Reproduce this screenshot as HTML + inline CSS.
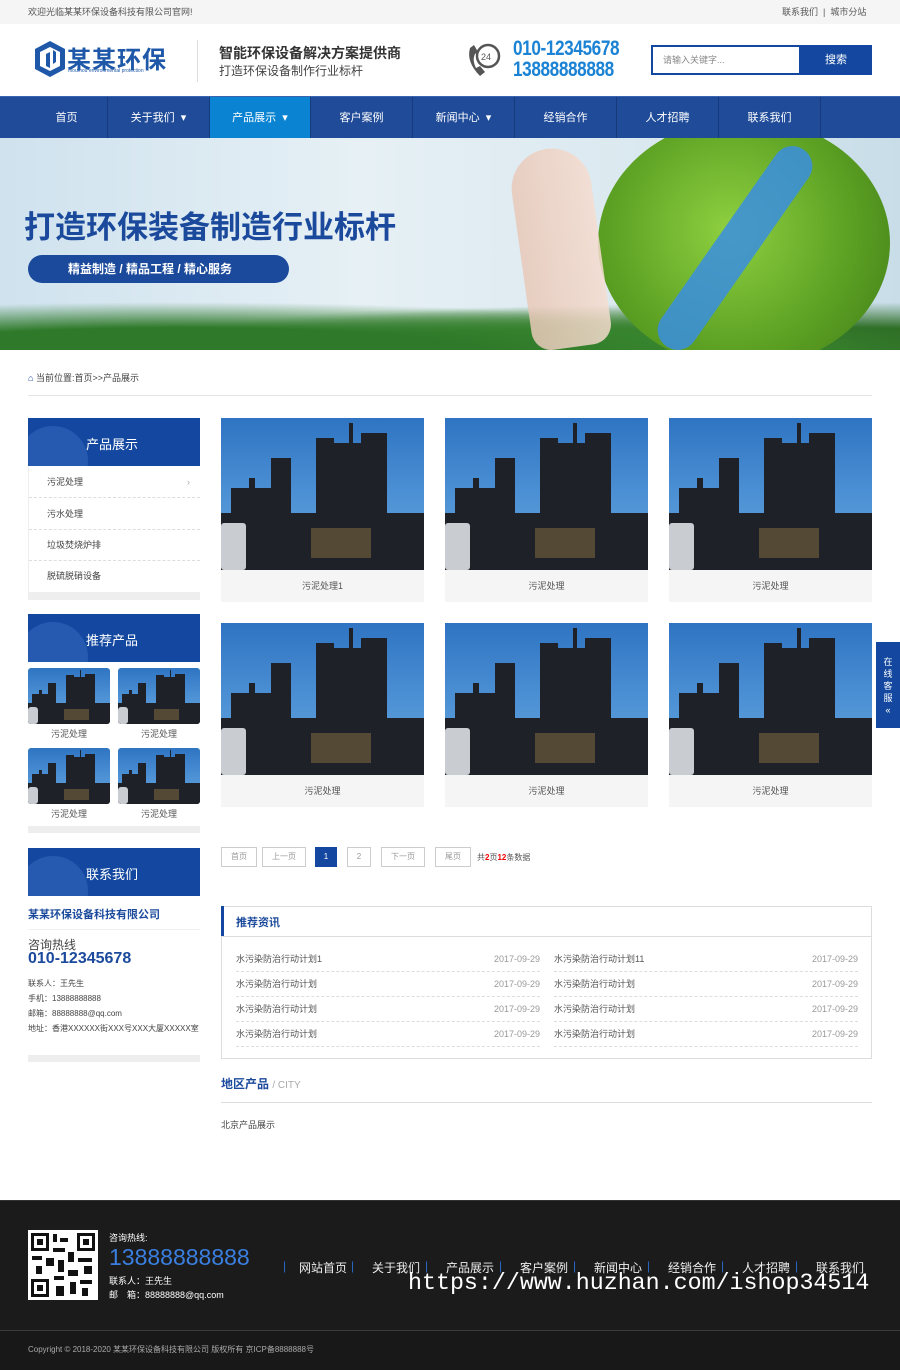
<!DOCTYPE html>
<html><head><meta charset="utf-8"><style>
*{margin:0;padding:0;box-sizing:border-box}
body{width:900px;height:1370px;position:relative;font-family:"Liberation Sans","Noto Sans CJK SC",sans-serif;color:#333;background:#fff;overflow:hidden}
.a{position:absolute}
.top{left:0;top:0;width:900px;height:24px;background:#f5f5f5;font-size:9px;color:#555;line-height:24px}
.nav{left:0;top:96px;width:900px;height:42px;background:#1f4b98;border-top:1px solid #3a64ad}
.nav div{position:absolute;top:0;height:42px;line-height:42px;color:#fff;font-size:11px;text-align:center;border-right:1px solid #163b7c}
.pi{background:#f5f5f5}
.img{position:absolute;left:0;top:0;width:100%;overflow:hidden;background:linear-gradient(#2f74c2,#4f93d6 55%,#6aa4dc)}
.img i{position:absolute;background:#1e2228}
.cap{position:absolute;left:0;width:100%;text-align:center;font-size:9px;color:#555}
.sh{background:#1448a0;color:#fff;font-size:13px;overflow:hidden}
.sh b{font-weight:normal;position:absolute;left:58px;top:16px}
.sh s{position:absolute;left:-10px;top:8px;width:70px;height:70px;border-radius:50%;background:#2b5fb4;opacity:.8}
.pg{position:absolute;top:847px;height:20px;border:1px solid #ccc;font-size:8px;color:#999;text-align:center;line-height:18px}
.nl{position:absolute;font-size:9px;color:#555;height:25px;line-height:25px;border-bottom:1px dashed #ddd}
.nl span{float:right;color:#999}
.ft{color:#fff}
.fn span{position:absolute;top:0}
</style></head><body>
<div class="a top"><span style="position:absolute;left:28px">欢迎光临某某环保设备科技有限公司官网!</span><span style="position:absolute;left:782px">联系我们 &nbsp;|&nbsp; 城市分站</span></div>
<svg class="a" style="left:34px;top:40px" width="32" height="38" viewBox="0 0 32 38"><path d="M16 1 L31 9 L31 29 L16 37 L1 29 L1 9 Z" fill="#1f58a8"/><path d="M16 7 L26 12 L26 26 L16 31 L6 26 L6 12Z" fill="#fff"/><path d="M12 14 L12 26 L16 28 L16 12Z M19 10 L19 24 L22 22 L22 12Z" fill="#1f58a8"/></svg>
<div class="a" style="left:67px;top:40px;font-size:24px;font-weight:bold;color:#1f58a8;letter-spacing:1px">某某环保</div>
<div class="a" style="left:68px;top:68px;font-size:5px;color:#1f58a8">moumou environmental protection</div>
<div class="a" style="left:197px;top:40px;width:1px;height:42px;background:#ddd"></div>
<div class="a" style="left:219px;top:43px;font-size:14px;font-weight:bold;color:#333">智能环保设备解决方案提供商</div>
<div class="a" style="left:219px;top:62px;font-size:12px;color:#444">打造环保设备制作行业标杆</div>
<svg class="a" style="left:466px;top:40px" width="40" height="40" viewBox="0 0 40 40"><circle cx="22" cy="16" r="11" fill="none" stroke="#555" stroke-width="2.5"/><text x="15" y="20" font-size="9" fill="#555" font-family="Liberation Sans">24</text><path d="M4 8 Q0 22 14 36 L19 32 L14 26 L10 28 Q6 20 9 14 L12 12 L8 5Z" fill="#555"/></svg>
<div class="a" style="left:513px;top:38px;font-size:21px;font-weight:bold;color:#1c83d4;line-height:21px;letter-spacing:-.5px;transform:scaleX(.82);transform-origin:left;white-space:nowrap">010-12345678<br>13888888888</div>
<div class="a" style="left:651px;top:45px;width:150px;height:30px;border:2px solid #1448a0;font-size:9px;color:#888;line-height:26px;padding-left:10px">请输入关键字...</div>
<div class="a" style="left:800px;top:45px;width:72px;height:30px;background:#1448a0;color:#fff;font-size:11px;text-align:center;line-height:30px">搜索</div>
<div class="a nav">
<div style="left:0;width:108px;padding-left:26px">首页</div>
<div style="left:108px;width:102px">关于我们 &nbsp;▾</div>
<div style="left:210px;width:101px;background:#0a84d2">产品展示 &nbsp;▾</div>
<div style="left:311px;width:102px">客户案例</div>
<div style="left:413px;width:102px">新闻中心 &nbsp;▾</div>
<div style="left:515px;width:102px">经销合作</div>
<div style="left:617px;width:102px">人才招聘</div>
<div style="left:719px;width:102px">联系我们</div>
</div>
<div class="a" style="left:0;top:138px;width:900px;height:212px;overflow:hidden;background:linear-gradient(90deg,#cfe2ee,#e6f0f5 40%,#dbe9f0 70%,#c8dde8)">
<div class="a" style="left:0;top:155px;width:900px;height:60px;background:radial-gradient(ellipse at 20% 100%,#2f7a2a 30%,transparent 60%),radial-gradient(ellipse at 60% 100%,#3c8a30 25%,transparent 55%),radial-gradient(ellipse at 90% 100%,#2e6e26 30%,transparent 60%)"></div>
<div class="a" style="left:598px;top:-20px;width:292px;height:250px;border-radius:50%;background:radial-gradient(circle at 45% 45%,#8ed040,#5a9e22 60%,#3f7a18)"></div>
<div class="a" style="left:715px;top:-10px;width:40px;height:240px;background:#3a8ee0;transform:rotate(35deg);border-radius:20px;opacity:.85"></div>
<div class="a" style="left:520px;top:10px;width:80px;height:200px;background:linear-gradient(90deg,#e8c8b8,#f5dccf);border-radius:40px 40px 20px 20px;transform:rotate(-8deg);opacity:.85"></div>
<div class="a" style="left:24px;top:64px;font-size:31px;font-weight:bold;color:#1b4a9c;white-space:nowrap">打造环保装备制造行业标杆</div>
<div class="a" style="left:28px;top:117px;width:261px;height:28px;border-radius:14px;background:#1b4a9c;color:#fff;font-size:12px;font-weight:bold;line-height:28px;padding-left:40px">精益制造 / 精品工程 / 精心服务</div>
</div>
<div class="a" style="left:28px;top:371px;font-size:9px;color:#444"><span style="color:#1448a0">⌂</span> 当前位置:首页&gt;&gt;产品展示</div>
<div class="a" style="left:28px;top:395px;width:844px;height:1px;background:#e5e5e5"></div>
<div class="a sh" style="left:28px;top:418px;width:172px;height:48px"><s></s><b>产品展示</b></div>
<div class="a" style="left:28px;top:466px;width:172px;height:134px;border-left:1px solid #eee;font-size:9px;color:#444">
<div style="height:32px;line-height:32px;padding-left:18px;border-bottom:1px dashed #ddd">污泥处理<span style="float:right;margin-right:10px;color:#aaa">›</span></div>
<div style="height:32px;line-height:32px;padding-left:18px;border-bottom:1px dashed #ddd">污水处理</div>
<div style="height:31px;line-height:31px;padding-left:18px;border-bottom:1px dashed #ddd">垃圾焚烧炉排</div>
<div style="height:31px;line-height:31px;padding-left:18px">脱硫脱硝设备</div>
<div style="height:8px;background:#eee;margin-left:-1px"></div>
</div>
<div class="a sh" style="left:28px;top:614px;width:172px;height:48px"><s></s><b>推荐产品</b></div>
<div id="rec"></div>
<div class="a" style="left:28px;top:826px;width:172px;height:7px;background:#eee"></div>
<div class="a sh" style="left:28px;top:848px;width:172px;height:48px"><s></s><b>联系我们</b></div>
<div class="a" style="left:28px;top:906px;font-size:11px;font-weight:bold;color:#1b4a9c">某某环保设备科技有限公司</div>
<div class="a" style="left:28px;top:929px;width:172px;height:1px;background:#f0f0f0"></div>
<div class="a" style="left:28px;top:936px;font-size:12px;color:#444">咨询热线</div>
<div class="a" style="left:28px;top:950px;font-size:16px;font-weight:bold;color:#1b4a9c">010-12345678</div>
<div class="a" style="left:28px;top:976px;font-size:8px;color:#444;line-height:15px;width:172px">联系人：王先生<br>手机：13888888888<br>邮箱：88888888@qq.com<br>地址：香港XXXXXX街XXX号XXX大厦XXXXX室</div>
<div class="a" style="left:28px;top:1055px;width:172px;height:7px;background:#eee"></div>
<div id="grid"></div>
<div class="pg" style="left:221px;width:36px">首页</div>
<div class="pg" style="left:262px;width:44px">上一页</div>
<div class="pg" style="left:315px;width:22px;background:#1448a0;border-color:#1448a0;color:#fff">1</div>
<div class="pg" style="left:347px;width:24px">2</div>
<div class="pg" style="left:381px;width:44px">下一页</div>
<div class="pg" style="left:435px;width:36px">尾页</div>
<div class="a" style="left:477px;top:852px;font-size:8px;color:#555">共<b style="color:#e00">2</b>页<b style="color:#e00">12</b>条数据</div>
<div class="a" style="left:221px;top:906px;width:651px;height:153px;border:1px solid #ddd"></div>
<div class="a" style="left:221px;top:906px;width:3px;height:30px;background:#1448a0"></div>
<div class="a" style="left:221px;top:936px;width:651px;height:1px;background:#ddd"></div>
<div class="a" style="left:236px;top:914px;font-size:11px;font-weight:bold;color:#1b4a9c">推荐资讯</div>
<div class="nl" style="left:236px;top:947px;width:304px">水污染防治行动计划1<span>2017-09-29</span></div>
<div class="nl" style="left:236px;top:972px;width:304px">水污染防治行动计划<span>2017-09-29</span></div>
<div class="nl" style="left:236px;top:997px;width:304px">水污染防治行动计划<span>2017-09-29</span></div>
<div class="nl" style="left:236px;top:1022px;width:304px">水污染防治行动计划<span>2017-09-29</span></div>
<div class="nl" style="left:554px;top:947px;width:304px">水污染防治行动计划11<span>2017-09-29</span></div>
<div class="nl" style="left:554px;top:972px;width:304px">水污染防治行动计划<span>2017-09-29</span></div>
<div class="nl" style="left:554px;top:997px;width:304px">水污染防治行动计划<span>2017-09-29</span></div>
<div class="nl" style="left:554px;top:1022px;width:304px">水污染防治行动计划<span>2017-09-29</span></div>
<div class="a" style="left:221px;top:1075px;font-size:12px;font-weight:bold;color:#1b4a9c">地区产品 <span style="font-weight:normal;color:#aaa;font-size:10px">/ CITY</span></div>
<div class="a" style="left:221px;top:1102px;width:651px;height:1px;background:#ddd"></div>
<div class="a" style="left:221px;top:1118px;font-size:9px;color:#444">北京产品展示</div>
<div class="a" style="left:876px;top:642px;width:24px;height:86px;background:#1448a0;color:#fff;font-size:9px;text-align:center;line-height:12px;padding-top:14px">在<br>线<br>客<br>服<br>«</div>
<div class="a" style="left:0;top:1200px;width:900px;height:130px;background:#1b1b1b;border-top:1px solid #333"></div>
<div class="a" style="left:0;top:1330px;width:900px;height:40px;background:#181818;border-top:1px solid #3a3a3a"></div>
<svg class="a" style="left:28px;top:1230px;background:#fff" width="70" height="70" viewBox="0 0 70 70"><g fill="#111"><rect x="3" y="3" width="18" height="18"/><rect x="49" y="3" width="18" height="18"/><rect x="3" y="49" width="18" height="18"/></g><g fill="#fff"><rect x="6" y="6" width="12" height="12"/><rect x="52" y="6" width="12" height="12"/><rect x="6" y="52" width="12" height="12"/></g><g fill="#111"><rect x="9" y="9" width="6" height="6"/><rect x="55" y="9" width="6" height="6"/><rect x="9" y="55" width="6" height="6"/><rect x="25" y="4" width="4" height="8"/><rect x="32" y="8" width="8" height="4"/><rect x="25" y="18" width="12" height="4"/><rect x="40" y="22" width="6" height="10"/><rect x="4" y="26" width="10" height="4"/><rect x="18" y="28" width="8" height="8"/><rect x="30" y="30" width="6" height="12"/><rect x="50" y="28" width="14" height="4"/><rect x="56" y="36" width="8" height="8"/><rect x="8" y="36" width="6" height="8"/><rect x="26" y="46" width="10" height="4"/><rect x="40" y="40" width="10" height="6"/><rect x="28" y="56" width="8" height="10"/><rect x="42" y="52" width="6" height="12"/><rect x="52" y="50" width="12" height="4"/><rect x="54" y="58" width="6" height="8"/></g></svg>
<div class="a ft" style="left:109px;top:1231px;font-size:9px">咨询热线:</div>
<div class="a" style="left:109px;top:1244px;font-size:23px;color:#3a7fe0">13888888888</div>
<div class="a ft" style="left:109px;top:1274px;font-size:9px;line-height:14px">联系人：王先生<br>邮　箱：88888888@qq.com</div>
<div class="a fn" style="left:0;top:1259px;width:900px;height:16px;font-size:12px;color:#eee">
<span style="left:283px;color:#2a6ac8">|</span><span style="left:299px">网站首页</span><span style="left:351px;color:#2a6ac8">|</span><span style="left:372px">关于我们</span><span style="left:425px;color:#2a6ac8">|</span><span style="left:446px">产品展示</span><span style="left:499px;color:#2a6ac8">|</span><span style="left:520px">客户案例</span><span style="left:573px;color:#2a6ac8">|</span><span style="left:594px">新闻中心</span><span style="left:647px;color:#2a6ac8">|</span><span style="left:668px">经销合作</span><span style="left:721px;color:#2a6ac8">|</span><span style="left:742px">人才招聘</span><span style="left:795px;color:#2a6ac8">|</span><span style="left:816px">联系我们</span></div>
<div class="a" style="left:408px;top:1270px;font-family:'Liberation Mono',monospace;font-size:23.3px;color:#fff;white-space:nowrap;letter-spacing:0">https://www.huzhan.com/ishop34514</div>
<div class="a" style="left:28px;top:1344px;font-size:8px;color:#aaa">Copyright © 2018-2020 某某环保设备科技有限公司 版权所有 京ICP备8888888号</div>
<script>
function fac(w,h){var s='<div class="img" style="height:'+h+'px">';var k=w/203,m=h/152;
var r=[[0,95,203,57],[10,70,60,82],[50,40,20,112],[95,20,18,132],[110,25,30,127],[140,15,26,137],[150,95,53,57],[28,60,6,40],[60,55,6,40],[128,5,4,40]];
r.forEach(function(a){s+='<i style="left:'+a[0]*k+'px;top:'+a[1]*m+'px;width:'+a[2]*k+'px;height:'+a[3]*m+'px"></i>'});
s+='<i style="left:0px;top:'+105*m+'px;width:'+25*k+'px;height:'+47*m+'px;background:#c9ccd0;border-radius:3px"></i>';
s+='<i style="left:'+90*k+'px;top:'+110*m+'px;width:'+60*k+'px;height:'+30*m+'px;background:#6a5a3a;opacity:.7"></i></div>';return s}
var g='';[221,445,669].forEach(function(x){[418,623].forEach(function(y,j){g+='<div class="a pi" style="left:'+x+'px;top:'+y+'px;width:203px;height:184px">'+fac(203,152)+'<div class="cap" style="top:161px">'+(x==221&&j==0?'污泥处理1':'污泥处理')+'</div></div>'})});
document.getElementById('grid').outerHTML=g;
var r='';[[28,668],[118,668],[28,748],[118,748]].forEach(function(p){r+='<div class="a" style="left:'+p[0]+'px;top:'+p[1]+'px;width:82px;height:56px;border-radius:3px;overflow:hidden">'+fac(82,56)+'</div><div class="a" style="left:'+p[0]+'px;top:'+(p[1]+59)+'px;width:82px;text-align:center;font-size:9px;color:#555">污泥处理</div>'});
document.getElementById('rec').outerHTML=r;
</script>
</body></html>
